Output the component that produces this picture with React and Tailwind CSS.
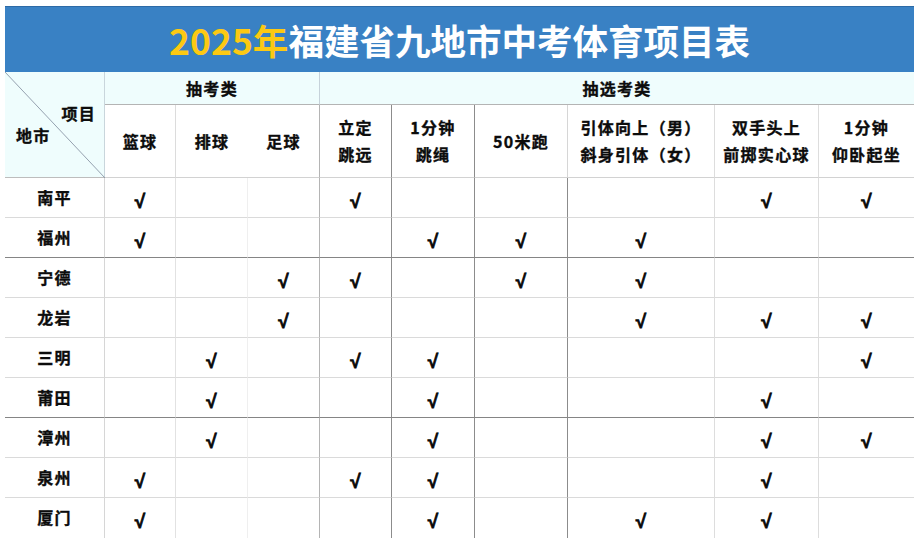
import React from "react";

const FONT = { fontFamily: '"Noto Sans CJK SC", "Noto Sans", sans-serif' };
const CHECK = { fontFamily: '"Liberation Sans", Arial, sans-serif' };

const cities = [
  { name: "南平", c: [1, 0, 0, 1, 0, 0, 0, 1, 1] },
  { name: "福州", c: [1, 0, 0, 0, 1, 1, 1, 0, 0] },
  { name: "宁德", c: [0, 0, 1, 1, 0, 1, 1, 0, 0] },
  { name: "龙岩", c: [0, 0, 1, 0, 0, 0, 1, 1, 1] },
  { name: "三明", c: [0, 1, 0, 1, 1, 0, 0, 0, 1] },
  { name: "莆田", c: [0, 1, 0, 0, 1, 0, 0, 1, 0] },
  { name: "漳州", c: [0, 1, 0, 0, 1, 0, 0, 1, 1] },
  { name: "泉州", c: [1, 0, 0, 1, 1, 0, 0, 1, 0] },
  { name: "厦门", c: [1, 0, 0, 0, 1, 0, 1, 1, 0] },
];

const dataRight = [
  "border-r border-r-[#d6d6d6]",
  "border-r border-r-[#e2e2e2]",
  "border-r border-r-[#efefef]",
  "border-r border-r-[#b4b4b4]",
  "border-r border-r-[#8c8c8c]",
  "border-r border-r-[#8c8c8c]",
  "border-r border-r-[#8c8c8c]",
  "border-r border-r-[#dddddd]",
  "border-r border-r-[#dddddd]",
  "",
];

const headRight = [
  "border-r border-r-[#dcdcdc]",
  "",
  "border-r border-r-[#b4b4b4]",
  "border-r border-r-[#8c8c8c]",
  "border-r border-r-[#8c8c8c]",
  "border-r border-r-[#d6d6d6]",
  "border-r border-r-[#dddddd]",
  "border-r border-r-[#dddddd]",
  "",
];

const heads = [
  ["篮球"],
  ["排球"],
  ["足球"],
  ["立定", "跳远"],
  ["1分钟", "跳绳"],
  ["50米跑"],
  ["引体向上（男）", "斜身引体（女）"],
  ["双手头上", "前掷实心球"],
  ["1分钟", "仰卧起坐"],
];

export default function App() {
  return (
    <div className="w-[921px] h-[540px] bg-white text-[#0c0c0c] font-bold" style={FONT}>
      <div className="pt-[6px] pl-[5px]">
        <div className="w-[909px]">
          {/* Title */}
          <div className="h-[66px] bg-[#3981c4] border-t border-t-[#2c6aa6] flex items-center justify-center text-[35.5px] leading-none">
            <span className="text-[#fcc913]">2025年</span>
            <span className="text-white">福建省九地市中考体育项目表</span>
          </div>

          {/* Grid */}
          <div className="grid grid-cols-[100px_71px_72px_72px_72px_83px_93px_147px_104px_95px] grid-rows-[33px_73px_repeat(9,40px)] text-[16px] tracking-[1.3px] [-webkit-text-stroke:0.35px_#0c0c0c]">
            {/* diagonal cell */}
            <div className="row-span-2 relative bg-[#effdfd] border-r border-r-[#c9d6dc] border-b border-b-[#bdbdbd] flex flex-col pt-[30px]">
              <svg className="absolute inset-0" width="100" height="106" viewBox="0 0 100 106">
                <line x1="0" y1="0" x2="100" y2="106" stroke="#8a96a6" strokeWidth="0.9" />
              </svg>
              <span className="self-end mr-[8px] leading-[22px]">项目</span>
              <span className="ml-[11px] leading-[22px]">地市</span>
            </div>
            {/* category row */}
            <div className="col-span-3 bg-[#effdfd] border-r border-r-[#c6d2da] border-b border-b-[#b4b4b4] flex items-center justify-center">
              抽考类
            </div>
            <div className="col-span-6 bg-[#effdfd] border-b border-b-[#b4b4b4] flex items-center justify-center">
              抽选考类
            </div>
            {/* sub heads */}
            {heads.map((h, i) => (
              <div
                key={i}
                className={`${headRight[i]} border-b border-b-[#d2d2d2] flex flex-col items-center justify-center leading-[27px] text-center whitespace-nowrap`}
              >
                {h.map((l, j) => (
                  <span key={j}>{l}</span>
                ))}
              </div>
            ))}
            {/* data rows */}
            {cities.map((city, r) => {
              const bottom =
                r === 1 || r === 5
                  ? "border-b border-b-[#858585]"
                  : r === 8
                  ? ""
                  : "border-b border-b-[#dadada]";
              return (
                <React.Fragment key={city.name}>
                  <div className={`${dataRight[0]} ${bottom} flex items-center justify-center pb-[2px]`}>
                    {city.name}
                  </div>
                  {city.c.map((v, i) => (
                    <div
                      key={i}
                      className={`${dataRight[i + 1]} ${bottom} flex items-center justify-center pt-[9px] text-[19px] font-bold tracking-normal [-webkit-text-stroke:0.7px_#000]`}
                      style={CHECK}
                    >
                      {v ? "√" : ""}
                    </div>
                  ))}
                </React.Fragment>
              );
            })}
          </div>
        </div>
      </div>
    </div>
  );
}
